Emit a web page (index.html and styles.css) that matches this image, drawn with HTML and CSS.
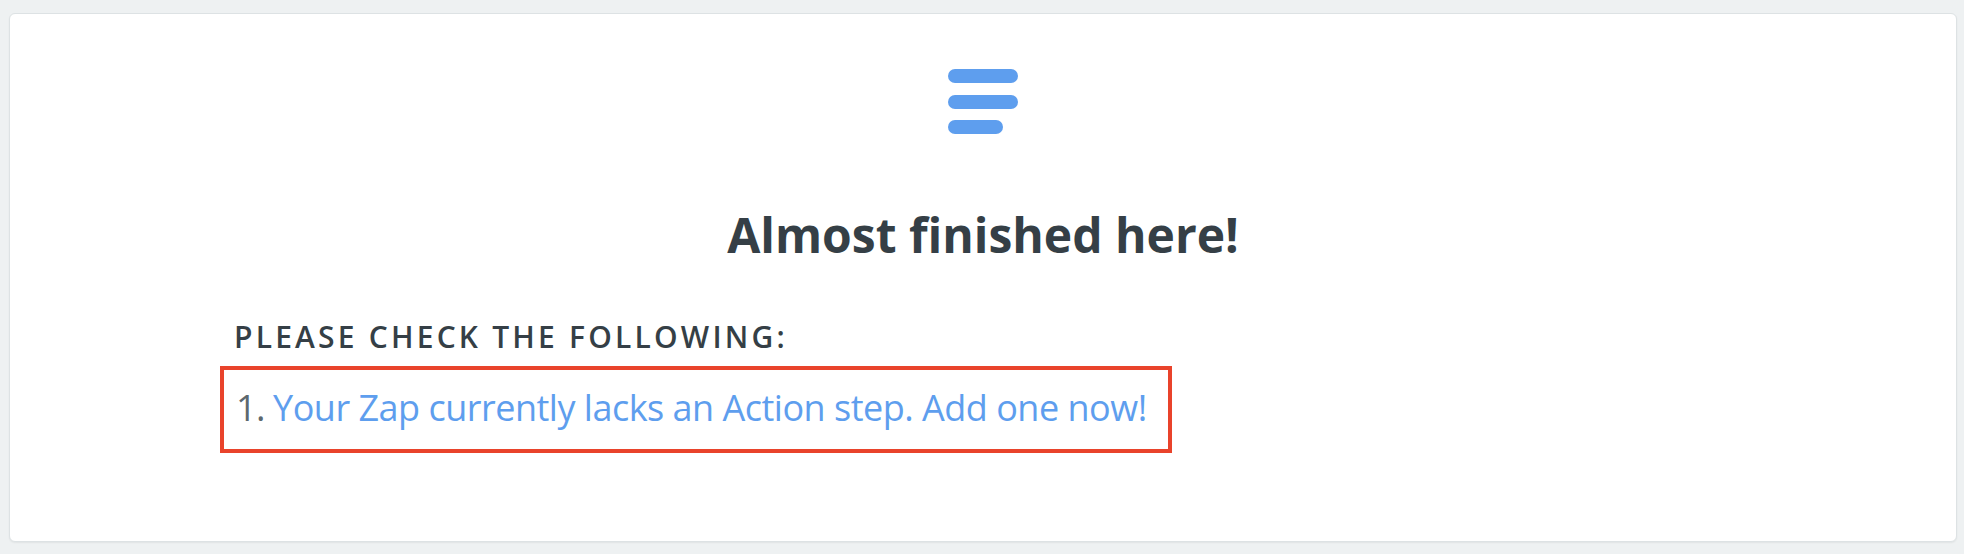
FILE: index.html
```html
<!DOCTYPE html>
<html lang="en">
<head>
<meta charset="utf-8">
<title>Almost finished here!</title>
<link rel="stylesheet" href="styles.css">
</head>
<body>
  <main class="card">
    <div class="card-icon">
      <svg width="70" height="65" viewBox="0 0 70 65" aria-hidden="true">
        <rect x="0" y="0" width="70" height="14" rx="7" fill="#5e9eee"/>
        <rect x="0" y="26" width="70" height="14" rx="7" fill="#5e9eee"/>
        <rect x="0" y="51" width="55" height="14" rx="7" fill="#5e9eee"/>
      </svg>
    </div>
    <h1 class="card-title">Almost finished here!</h1>
    <section class="checklist">
      <h2 class="checklist-label">Please check the following:</h2>
      <ol class="checklist-items">
        <li class="checklist-item">
          <span class="item-num">1.</span>
          <a class="item-link" href="#">Your Zap currently lacks an Action step. Add one now!</a>
        </li>
      </ol>
    </section>
  </main>
</body>
</html>
```

FILE: styles.css
```css
html, body {
  margin: 0;
  padding: 0;
}

body {
  background: #eef1f2;
  font-family: "Open Sans", "Liberation Sans", sans-serif;
  color: #353f46;
  height: 554px;
  box-sizing: border-box;
  padding: 13px 7px 12px 9px;
}

.card {
  box-sizing: border-box;
  height: 529px;
  background: #ffffff;
  border: 1px solid #dde2e4;
  border-radius: 6px;
  box-shadow: 0 1px 2px rgba(0, 0, 0, 0.06);
  padding-top: 55px;
  display: flex;
  flex-direction: column;
  align-items: center;
}

.card-icon {
  display: flex;
  justify-content: center;
  height: 65px;
}

.card-icon svg {
  display: block;
}

.card-title {
  margin: 68px 0 0;
  font-size: 48px;
  font-weight: 700;
  line-height: normal;
  color: #353f46;
  text-align: center;
}

.checklist {
  width: 1498px;
  margin-top: 49px;
}

.checklist-label {
  margin: 0;
  font-size: 30px;
  font-weight: 600;
  line-height: normal;
  letter-spacing: 3.2px;
  text-transform: uppercase;
  color: #353f46;
}

.checklist-items {
  list-style: none;
  margin: 9px 0 0 -14px;
  padding: 0;
}

.checklist-item {
  display: inline-flex;
  align-items: baseline;
  gap: 8px;
  border: 4px solid #e9432b;
  padding: 11px 21px 14px 12px;
  font-size: 36px;
  line-height: 54px;
  letter-spacing: -0.5px;
}

.item-num {
  color: #5d686e;
}

.item-link {
  color: #5e9eee;
  text-decoration: none;
}
```
